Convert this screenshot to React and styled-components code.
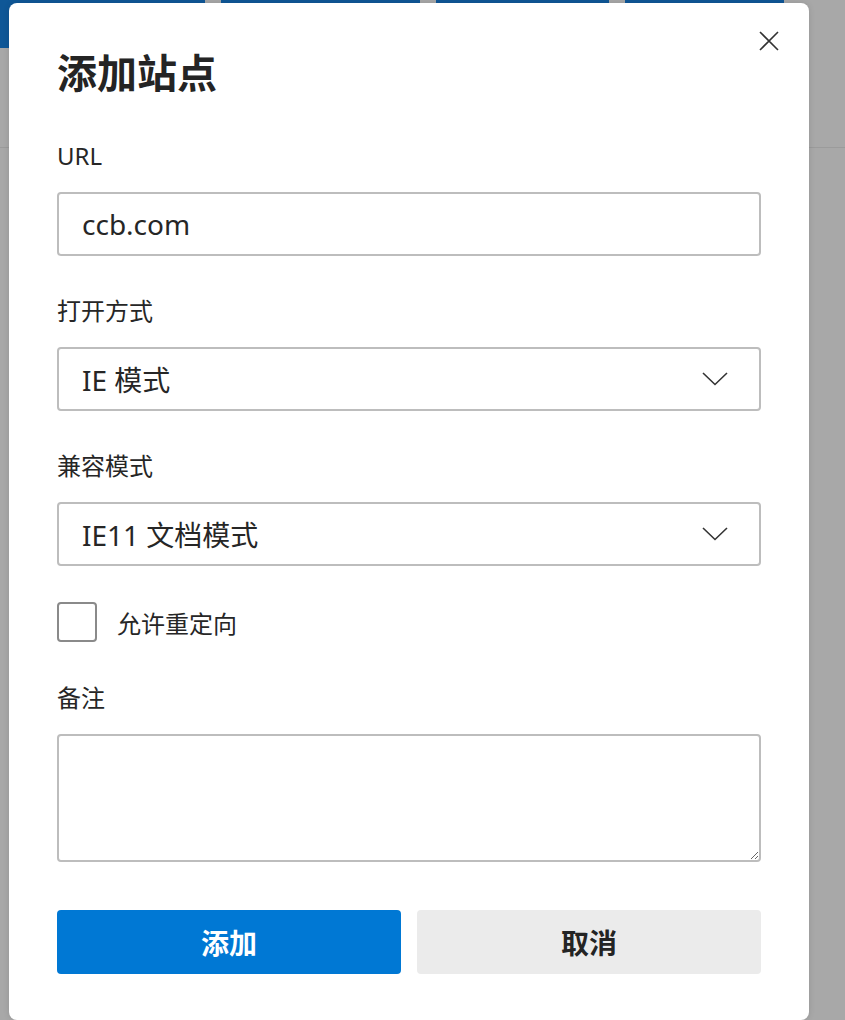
import React from 'react'
import styled, { createGlobalStyle } from 'styled-components'

const GlobalStyle = createGlobalStyle`
  html, body {
    margin: 0;
    padding: 0;
    background: #a8a8a8;
    font-family: 'Noto Sans', 'Noto Sans CJK SC', sans-serif;
  }
  * {
    box-sizing: border-box;
  }
`

const Backdrop = styled.div`
  position: relative;
  width: 845px;
  height: 1020px;
  overflow: hidden;
  background: #a8a8a8;
`
const TabRow = styled.div`
  display: flex;
  gap: 16px;
  height: 48px;
`
const Tab = styled.div`
  width: ${p => p.w}px;
  background: #0f5797;
`
const Header = styled.div`
  height: 100px;
  border-bottom: 1px solid #9b9b9b;
`

const Dialog = styled.div`
  position: absolute;
  left: 9px;
  top: 3px;
  width: 800px;
  height: 1017px;
  background: #fff;
  border-radius: 8px;
  padding: 44px 48px 0;
  display: flex;
  flex-direction: column;
  box-shadow: 0 0 6px rgba(0, 0, 0, 0.12);
`
const Close = styled.button`
  position: absolute;
  top: 25px;
  right: 27px;
  width: 26px;
  height: 26px;
  padding: 0;
  border: none;
  background: none;
  display: flex;
  align-items: center;
  justify-content: center;
`
const Title = styled.h2`
  margin: 0 0 41px;
  font-size: 40px;
  line-height: 52px;
  font-weight: 700;
  color: #242424;
`
const Field = styled.div`
  display: flex;
  flex-direction: column;
  margin-bottom: 39px;
`
const Label = styled.label`
  font-size: 24px;
  line-height: 32px;
  color: #262626;
  margin-bottom: 20px;
`
const Input = styled.div`
  height: 64px;
  border: 2px solid #bdbdbd;
  border-radius: 4px;
  padding: 0 23px;
  display: flex;
  align-items: center;
  justify-content: space-between;
  font-size: 28px;
  color: #262626;
`
const Chevron = styled.svg`
  margin-right: 8px;
`
const CheckRow = styled.div`
  display: flex;
  align-items: center;
  gap: 20px;
  margin: -3px 0 40px;
`
const Box = styled.div`
  width: 40px;
  height: 40px;
  border: 2px solid #8a8a8a;
  border-radius: 4px;
`
const CheckLabel = styled.span`
  font-size: 24px;
  color: #262626;
`
const Notes = styled.textarea`
  height: 128px;
  border: 2px solid #bdbdbd;
  border-radius: 4px;
  resize: both;
  font-family: inherit;
  font-size: 24px;
  outline: none;
`
const Buttons = styled.div`
  display: flex;
  gap: 16px;
  margin-top: 9px;
`
const Button = styled.button`
  flex: 1;
  height: 64px;
  border: none;
  border-radius: 4px;
  font-family: inherit;
  font-size: 28px;
  font-weight: 700;
  background: ${p => (p.primary ? '#0078d4' : '#ebebeb')};
  color: ${p => (p.primary ? '#fff' : '#242424')};
`

const Arrow = () => (
  <Chevron width="26" height="14" viewBox="0 0 26 14">
    <polyline points="1,1 13,12.5 25,1" fill="none" stroke="#333" strokeWidth="1.6" />
  </Chevron>
)

export default function App() {
  return (
    <Backdrop>
      <GlobalStyle />
      <TabRow>
        <Tab w={205} />
        <Tab w={199} />
        <Tab w={173} />
        <Tab w={159} />
      </TabRow>
      <Header />
      <Dialog>
        <Close>
          <svg width="20" height="20" viewBox="0 0 20 20">
            <path d="M1 1 L19 19 M19 1 L1 19" stroke="#333" strokeWidth="1.6" />
          </svg>
        </Close>
        <Title>添加站点</Title>
        <Field>
          <Label>URL</Label>
          <Input>ccb.com</Input>
        </Field>
        <Field>
          <Label>打开方式</Label>
          <Input>
            IE 模式
            <Arrow />
          </Input>
        </Field>
        <Field>
          <Label>兼容模式</Label>
          <Input>
            IE11 文档模式
            <Arrow />
          </Input>
        </Field>
        <CheckRow>
          <Box />
          <CheckLabel>允许重定向</CheckLabel>
        </CheckRow>
        <Field>
          <Label>备注</Label>
          <Notes />
        </Field>
        <Buttons>
          <Button primary>添加</Button>
          <Button>取消</Button>
        </Buttons>
      </Dialog>
    </Backdrop>
  )
}
